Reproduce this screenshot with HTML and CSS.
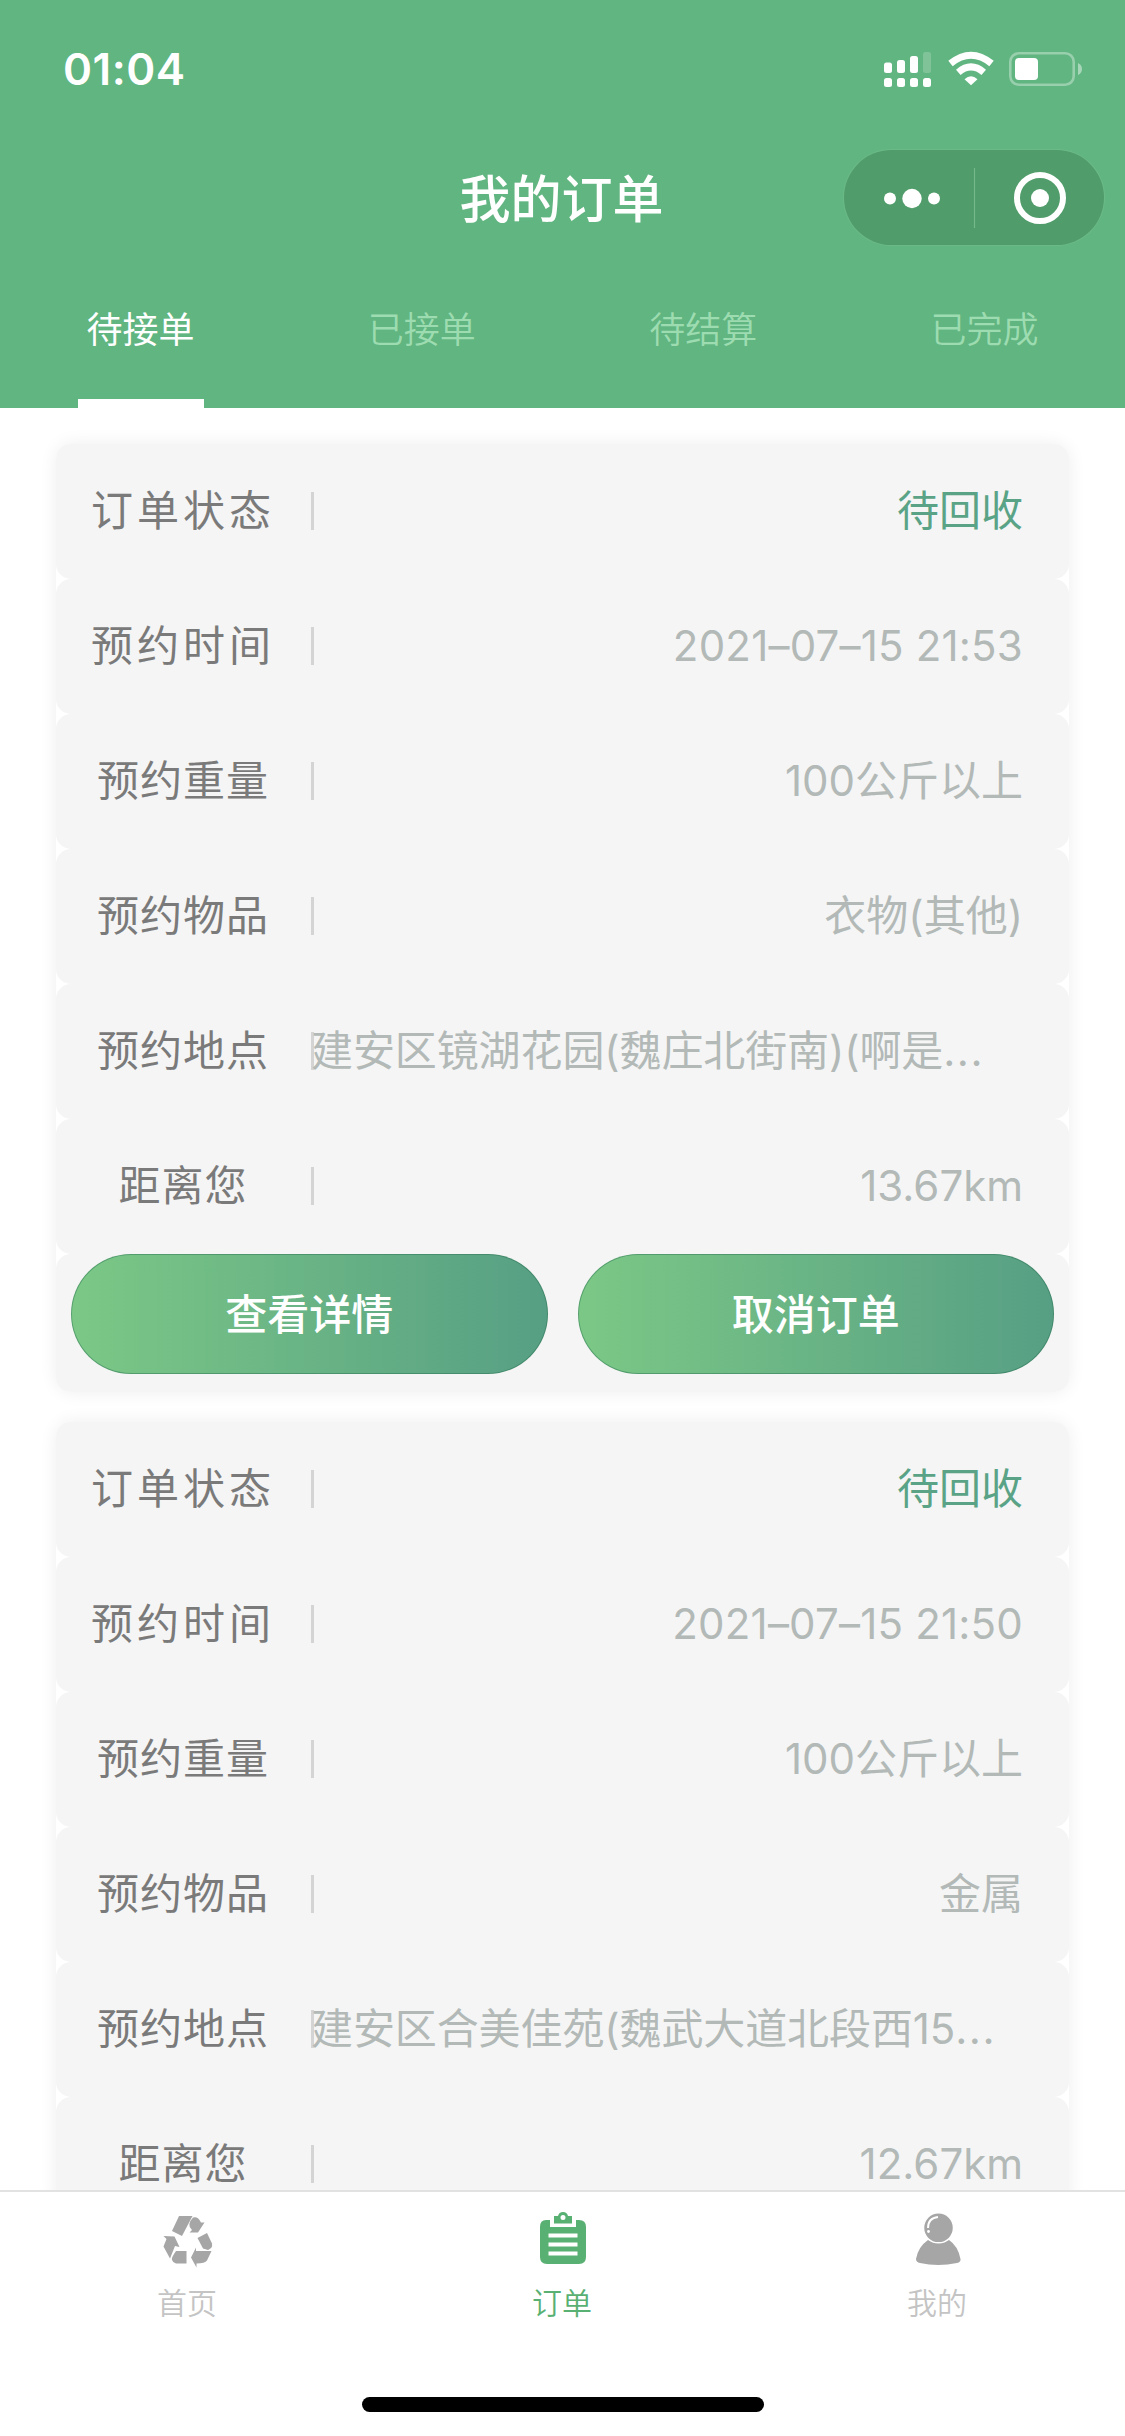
FILE: index.html
```html
<!DOCTYPE html>
<html lang="zh-CN">
<head>
<meta charset="utf-8">
<title>我的订单</title>
<link rel="stylesheet" href="styles.css">
</head>
<body>
<div class="app">
  <header class="header">
    <div class="status">
      <span class="clock">01:04</span>
      <svg class="status-icons" viewBox="0 0 200 38" width="200" height="38">
        <g fill="#fff">
          <rect x="2" y="12.5" width="8" height="10.5" rx="2.5"/>
          <rect x="15" y="10" width="8" height="13" rx="2.5"/>
          <rect x="28" y="6" width="8" height="17" rx="2.5"/>
          <rect x="41" y="2" width="8" height="21" rx="2.5" opacity=".2"/>
          <rect x="2" y="28" width="8" height="9" rx="2.5"/>
          <rect x="15" y="28" width="8" height="9" rx="2.5"/>
          <rect x="28" y="28" width="8" height="9" rx="2.5"/>
          <rect x="41" y="28" width="8" height="9" rx="2.5"/>
          <path d="M89 35.3 82.500 29.200Q89 23.500 95.500 29.200Z"/>
        </g>
        <g fill="none" stroke="#fff" stroke-width="7">
          <path d="M68.500 13.500Q89 -3 109.500 13.500"/>
          <path d="M76.300 22.300Q89 11.500 101.700 22.300"/>
        </g>
        <rect x="128.300" y="3.300" width="63.400" height="31.400" rx="8.500" fill="none" stroke="#fff" stroke-width="2.600" opacity=".35"/>
        <path d="M196 13Q200 15 200 19T196 25Z" fill="#fff" opacity=".45"/>
        <rect x="133" y="8" width="23" height="22" rx="4" fill="#fff"/>
      </svg>
    </div>
    <div class="nav">
      <h1 class="title">我的订单</h1>
      <div class="capsule">
        <svg viewBox="0 0 260 95" width="260" height="95">
          <g fill="#fff"><circle cx="46" cy="48.500" r="6"/><circle cx="68" cy="48.500" r="9.700"/><circle cx="90" cy="48.500" r="6"/><circle cx="196" cy="48" r="9"/></g>
          <path d="M130.500 18V78" stroke="#75b98b" stroke-width="1.200"/>
          <circle cx="196" cy="48" r="23" fill="none" stroke="#fff" stroke-width="6"/>
        </svg>
      </div>
    </div>
    <nav class="tabs">
      <span class="tab active">待接单</span>
      <span class="tab">已接单</span>
      <span class="tab">待结算</span>
      <span class="tab">已完成</span>
    </nav>
  </header>

  <main class="list">
    <section class="card">
      <div class="row"><span class="label wide">订单状态</span><span class="value state">待回收</span></div>
      <div class="row"><span class="label wide">预约时间</span><span class="value date">2021–07–15 21:53</span></div>
      <div class="row"><span class="label">预约重量</span><span class="value">100公斤以上</span></div>
      <div class="row"><span class="label">预约物品</span><span class="value">衣物(其他)</span></div>
      <div class="row"><span class="label">预约地点</span><span class="value address">建安区镜湖花园(魏庄北街南)(啊是<span class="dots">...</span></span></div>
      <div class="row"><span class="label">距离您</span><span class="value">13.67km</span></div>
      <div class="actions"><button class="btn">查看详情</button><button class="btn">取消订单</button></div>
    </section>
    <section class="card">
      <div class="row"><span class="label wide">订单状态</span><span class="value state">待回收</span></div>
      <div class="row"><span class="label wide">预约时间</span><span class="value date">2021–07–15 21:50</span></div>
      <div class="row"><span class="label">预约重量</span><span class="value">100公斤以上</span></div>
      <div class="row"><span class="label">预约物品</span><span class="value">金属</span></div>
      <div class="row"><span class="label">预约地点</span><span class="value address">建安区合美佳苑(魏武大道北段西15<span class="dots">...</span></span></div>
      <div class="row"><span class="label">距离您</span><span class="value">12.67km</span></div>
    </section>
  </main>

  <footer class="tabbar">
    <div class="tabbar-items">
      <div class="item">
        <svg viewBox="0 0 80 80" width="80" height="80" fill="#a6a6a6">
          <path d="M29 16H42.500L32 36 22 31Z"/>
          <path d="M43 17.500Q48 16 51 22.500L54.500 22.500 48 32.500H39.500L42 30Q36 25 43 17.500Z"/>
          <path d="M47.500 38 57 33 62 43.500Q63 48 58 50L53 48.500Z"/>
          <path d="M61.500 51 57 60.500Q55 63.500 46.500 63.500V67.500L41 57.500 46 47.500V51Z"/>
          <path d="M22 60Q21 58 26 51H36.500V63.500H26Q23 63 22 60Z"/>
          <path d="M13.500 36 24.500 36.500 29.500 47 25 46 20 58.500 13.500 46.500 16.500 39Z"/>
        </svg>
        <span>首页</span>
      </div>
      <div class="item on">
        <svg viewBox="0 0 80 80" width="80" height="80">
          <path fill="#59b073" d="M21 20H25V27H51V20H54Q61 20 61 27V57Q61 64 54 64H22Q15 64 15 57V27Q15 20 21 20Z"/>
          <path fill="#59b073" fill-rule="evenodd" d="M29 23.500V16H33Q34 12 38 12T43 16H47V23.500ZM38 15A2.500 2.500 0 1 0 38 20A2.500 2.500 0 1 0 38 15Z"/>
          <path stroke="#fff" stroke-width="4" d="M23.500 35.500H52.500M23.500 44.500H52.500M23.500 53.500H52.500"/>
        </svg>
        <span>订单</span>
      </div>
      <div class="item">
        <svg viewBox="0 0 80 80" width="80" height="80">
          <path fill="#a6a6a6" d="M28 40Q38 46 49 40Q58 46 60.500 59Q61 62 57 63Q38 67 20 63Q16 62 16 59Q18 47 28 40Z"/>
          <circle cx="38.500" cy="27.800" r="15" fill="#a6a6a6" stroke="#fff" stroke-width="1.500"/>
          <path d="M28 28Q28 18 38 17" fill="none" stroke="#fff" stroke-width="2"/><circle cx="28.500" cy="31.500" r="1.400" fill="#fff"/>
        </svg>
        <span>我的</span>
      </div>
    </div>
    <div class="home-indicator"></div>
  </footer>
</div>
</body>
</html>
```
FILE: styles.css
```css
* { box-sizing: border-box; }
body { margin: 0; background: #fff; font-family: Inter, "Noto Sans CJK SC", sans-serif; font-feature-settings: "calt" 0; }
.app { width: 1125px; height: 2436px; display: flex; flex-direction: column; overflow: hidden; }

.header { height: 408px; flex: none; background: #61b580; color: #fff; display: flex; flex-direction: column; }
.status { height: 138px; padding: 0 43px 0 63px; display: flex; justify-content: space-between; align-items: center; }
.clock { font-size: 44px; font-weight: 600; line-height: 50px; letter-spacing: .5px; }
.nav { height: 119px; display: grid; grid-template-columns: 281px 1fr 281px; align-items: center; }
.title { grid-column: 2; margin: 0; padding: 4px 2px 0 0; text-align: center; font-size: 51px; font-weight: 500; line-height: 60px; }
.capsule { width: 260px; height: 95px; border-radius: 48px; background: #509c6a; box-shadow: 0 0 0 1px #6bba86; }
.capsule svg { display: block; }
.tabs { height: 151px; display: flex; justify-content: space-between; }
.tab { width: 281px; display: flex; flex-direction: column; align-items: center; justify-content: space-between; padding: 48px 0 0; font-size: 36px; font-weight: 350; line-height: 50px; color: #9ddcb1; }
.tab.active { color: #fff; font-weight: 400; }
.tab.active::after { content: ""; width: 126px; height: 9px; background: #fff; }

.list { flex: 1; min-height: 0; overflow: hidden; padding: 36px 56px 0; display: flex; flex-direction: column; gap: 30px; }
.card { flex: none; height: 948px; border-radius: 16px; background: #fff; box-shadow: 0 0 18px rgba(0, 0, 0, .07); }
.row { height: 135px; display: flex; align-items: center; background: #f5f5f5; border-radius: 15px; padding: 0 46px 2px 0; font-size: 42px; line-height: 60px; }
.label { width: 258px; flex: none; padding-right: 4px; text-align: center; color: #7a7a7a; letter-spacing: 1px; font-weight: 400; background: linear-gradient(#d4d4d4, #d4d4d4) right 11px / 3px 38px no-repeat; }
.label.wide { letter-spacing: 4px; }
.value { flex: 1; text-align: right; white-space: nowrap; color: #b2b9b7; font-weight: 400; }
.value.state { color: #5aa386; }
.value.date { letter-spacing: .2px; }
.value.address { text-align: left; margin-left: -3px; letter-spacing: -.1px; }
.dots { letter-spacing: 1.5px; }
.actions { height: 138px; padding: 0 15px; display: flex; gap: 30px; background: #f5f5f5; border-radius: 15px; }
.btn { flex: 1; height: 120px; padding: 2px 0 0; border: 1px solid rgba(40, 110, 80, .45); border-radius: 60px; background: linear-gradient(to right, #7bc886, #579f84) border-box; color: #fff; font: 500 42px/60px Inter, "Noto Sans CJK SC", sans-serif; }

.tabbar { flex: none; height: 246px; border-top: 2px solid #e2e2e2; background: #fff; display: flex; flex-direction: column; align-items: center; justify-content: space-between; padding: 8px 0 24px; }
.tabbar-items { width: 100%; display: flex; }
.item { flex: 1; display: flex; flex-direction: column; align-items: center; gap: 1px; color: #c4c4c4; font-size: 30px; font-weight: 350; line-height: 44px; }
.item svg { margin-left: 4px; }
.item span { margin-right: 1px; }
.item.on { color: #59b073; }
.home-indicator { width: 402px; height: 15px; border-radius: 8px; background: #000; }
```
